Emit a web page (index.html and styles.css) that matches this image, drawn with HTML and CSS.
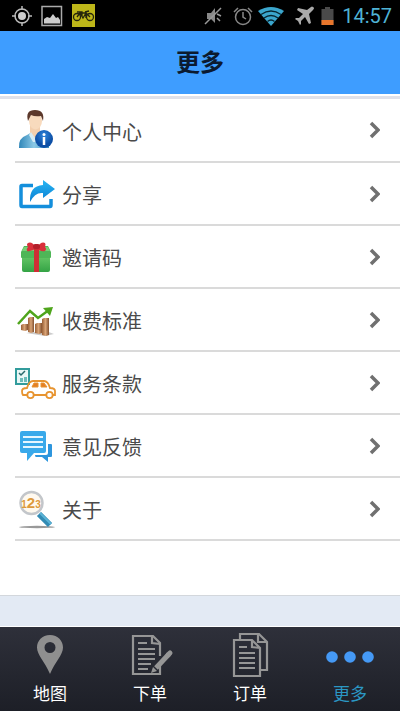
FILE: index.html
```html
<!DOCTYPE html>
<html lang="zh-CN">

<head>
  <meta charset="UTF-8">
  <meta name="viewport" content="width=device-width, initial-scale=1.0">
  <title>更多</title>
  <link rel="stylesheet" href="styles.css">
</head>

<body>
  <div class="status">
    <div class="status-left">
      <svg width="20" height="22" viewBox="0 0 20 22" fill="none" stroke="#bbb" stroke-width="1.5">
        <circle cx="10" cy="11" r="7" />
        <circle cx="10" cy="11" r="4" fill="#ccc" stroke="none" />
        <path d="M10 1v4M10 17v4M0 11h4M16 11h4" />
      </svg>
      <svg width="22" height="22" viewBox="0 0 22 22">
        <rect x="1" y="1.500" width="19.500" height="19" fill="none" stroke="#aaa" stroke-width="1.500" />
        <path d="M3 18.500V14l3-2 3 1 3-4 3 4 2-1 2 3v3.500z" fill="#ccc" />
      </svg>
      <svg width="23" height="23" viewBox="0 0 23 23">
        <rect width="23" height="23" fill="#bdb619" />
        <g fill="none" stroke="#25250c" stroke-width="1.300">
          <circle cx="5" cy="13" r="3.500" />
          <circle cx="18" cy="13" r="3.500" />
          <path d="M5 13l3-4h6l4 4M8 9l3 5 3-5M5 8h5v5M14 7v7M17 7l-4 1" />
        </g>
      </svg>
    </div>
    <div class="status-right">
      <svg class="mute" width="18" height="20" viewBox="0 0 18 20">
        <path d="M3 7h4l4-5v15l-4-4H3z" fill="#888" />
        <path d="M1 18L17 2M13 8l4 2M13 12l3 3" stroke="#999" stroke-width="1.500" />
      </svg>
      <svg class="alarm" width="20" height="20" viewBox="0 0 20 20" fill="none" stroke="#888" stroke-width="1.500">
        <circle cx="10" cy="11" r="7.500" />
        <path d="M10 6v5l3 2M1 6l4-4M19 6l-4-4" />
      </svg>
      <svg class="wifi" width="26" height="20" viewBox="0 0 26 20">
        <path d="M0 5Q13-3 26 5L13 20z" fill="#3ba6cd" />
        <path d="M3 8.500q10-7 20 0M6 12q7-5 14 0M9.500 15.500q3.500-3 7 0" fill="none" stroke="#062530" stroke-width="1.300" />
      </svg>
      <svg class="plane" width="20" height="20" viewBox="0 0 20 20">
        <path d="M18 1q2 1 0 3l-4 4 2 9-2 1-4-7-4 4v3l-1 1-2-4-3-2 1-1h3l4-4-6-4 1-2 9 2 4-3q1-1 2 0z" fill="#aaa" />
      </svg>
      <svg class="battery" width="13" height="20" viewBox="0 0 13 20">
        <path d="M4 1h5v2h3.500v16H.5V3H4z" fill="#4a4a4a" />
        <path d="M.5 14h12v5H.5z" fill="#e8762c" />
      </svg>
      <span class="clock">14:57</span>
    </div>
  </div>

  <header class="title">
    <h1>更多</h1>
  </header>

  <main>
    <ul class="menu">
      <li>
        <a href="#profile">
          <svg class="icon" viewBox="0 0 42 44">
            <defs>
              <linearGradient id="shirt" x2="1">
                <stop offset="0" stop-color="#2f86b8" />
                <stop offset=".5" stop-color="#8cc9e6" />
                <stop offset="1" stop-color="#3c8fc0" />
              </linearGradient>
              <radialGradient id="badge" cy=".3">
                <stop offset="0" stop-color="#2f86dd" />
                <stop offset="1" stop-color="#0d4fa6" />
              </radialGradient>
            </defs>
            <path d="M4 40q-1-10 8-13l5-3h8l5 4q5 2 4 12z" fill="url(#shirt)" />
            <path d="M15 17h10v8l-5 7-5-7z" fill="#f3cfae" />
            <path d="M16 24l4 6 5-6 2 3-4 7h-5l-4-7z" fill="#d5ebf4" />
            <ellipse cx="20.500" cy="13" rx="6.500" ry="8.500" fill="#f8dabd" />
            <path d="M13 13Q10 2 20 2q10 0 8 11l-2-5q-6 1-10-1z" fill="#5c382b" />
            <circle cx="29" cy="31" r="9" fill="url(#badge)" />
            <circle cx="29" cy="26.500" r="1.500" fill="#fff" />
            <path d="M29 29v8" stroke="#fff" stroke-width="2.500" />
          </svg>
          <span>个人中心</span>
          <svg class="arrow" viewBox="0 0 11 18"><path d="M2 2l7 7-7 7" /></svg>
        </a>
      </li>
      <li>
        <a href="#share">
          <svg class="icon" viewBox="0 0 42 44">
            <defs>
              <linearGradient id="share" x2="0" y2="1">
                <stop offset="0" stop-color="#29b6f3" />
                <stop offset="1" stop-color="#087fd3" />
              </linearGradient>
            </defs>
            <path d="M18 13.500H7q-1 0-1 1V33q0 1.500 1 1.500h28q1 0 1-1.500v-6" fill="none" stroke="#148fdc" stroke-width="3.500" />
            <path d="M28 8l12 9-12 9v-5q-8-1-13 9-1-16 13-17z" fill="url(#share)" />
          </svg>
          <span>分享</span>
          <svg class="arrow" viewBox="0 0 11 18"><path d="M2 2l7 7-7 7" /></svg>
        </a>
      </li>
      <li>
        <a href="#invite">
          <svg class="icon" viewBox="0 0 42 44">
            <defs>
              <linearGradient id="gift" x2="0" y2="1">
                <stop offset="0" stop-color="#68c968" />
                <stop offset="1" stop-color="#34a345" />
              </linearGradient>
            </defs>
            <rect x="7" y="20" width="28" height="17" rx="2" fill="url(#gift)" />
            <path d="M9 11h24l3 6v5q0 1-1 1H7q-1 0-1-1v-5z" fill="#4fb657" />
            <path d="M9 12h24l2 4H7z" fill="#78cf77" />
            <path d="M19 12h5v25h-5z" fill="#cf2d35" />
            <path d="M21 13q-4-7-8-5-2 1 0 4-2 2-1 4 5 1 9-3zm1 0q4-7 8-5 1 1 0 4 2 2 0 4-5 1-8-3z" fill="#d9303b" />
            <rect x="18" y="9" width="7" height="5" rx="2" fill="#b41f2b" />
          </svg>
          <span>邀请码</span>
          <svg class="arrow" viewBox="0 0 11 18"><path d="M2 2l7 7-7 7" /></svg>
        </a>
      </li>
      <li>
        <a href="#price">
          <svg class="icon" viewBox="0 0 42 44">
            <defs>
              <linearGradient id="bar" x2="1">
                <stop offset="0" stop-color="#9a6036" />
                <stop offset=".5" stop-color="#d9a376" />
                <stop offset="1" stop-color="#83502e" />
              </linearGradient>
            </defs>
            <path d="M11 35l19 3 9-2-8-3z" fill="#ccc" />
            <g fill="url(#bar)">
              <path d="M6 27l2-1h5v6l-3 1-4-1z" />
              <path d="M13 20l2-1h4v15l-3 1-3-1z" />
              <path d="M20 26l2-1h5v10l-3 1-4-1z" />
              <path d="M27 21l2-1h5v17l-3 1-4-1z" />
            </g>
            <path d="M3 26l12-13 8 7 11-8" fill="none" stroke="#4fa51c" stroke-width="2.500" />
            <path d="M28 10l10-1-3 9z" fill="#4fa51c" />
          </svg>
          <span>收费标准</span>
          <svg class="arrow" viewBox="0 0 11 18"><path d="M2 2l7 7-7 7" /></svg>
        </a>
      </li>
      <li>
        <a href="#terms">
          <svg class="icon" viewBox="0 0 42 44">
            <rect x="1" y="8" width="13" height="15" fill="#e9f7f6" stroke="#329c9c" stroke-width="2" />
            <path d="M4 12l2 2 4-4" fill="none" stroke="#286a6c" stroke-width="1.500" />
            <path d="M5 17h3v4H5zM9 16h3v5H9z" fill="#6dbcba" />
            <g fill="none" stroke="#e79430" stroke-width="1.800">
              <path d="M12 34H8q-1-1-1-4 0-3 5-3 2-7 6-7h11q4 0 6 7 5 0 5 3v4h-2M19 34h12" />
              <path d="M17 26l2-4h4v4zM26 22h3l3 4h-6z" fill="#e57f25" stroke-width="1" />
              <circle cx="15.500" cy="34" r="3.200" />
              <circle cx="34.500" cy="34" r="3.200" />
            </g>
          </svg>
          <span>服务条款</span>
          <svg class="arrow" viewBox="0 0 11 18"><path d="M2 2l7 7-7 7" /></svg>
        </a>
      </li>
      <li>
        <a href="#feedback">
          <svg class="icon" viewBox="0 0 42 44">
            <path d="M33 20h3q1 0 1 1v11q0 1-1 1h-3v5l-6-5h-6q-1 0-1-2h11q2 0 2-2z" fill="#2e96dd" />
            <path d="M7 7h22q2 0 2 2v18q0 2-2 2H19l-7 8v-8H7q-2 0-2-2V9q0-2 2-2z" fill="#39a9ea" />
            <path d="M8 13h20M8 18h20M8 23h20" stroke="#e5f6ff" stroke-width="2" />
          </svg>
          <span>意见反馈</span>
          <svg class="arrow" viewBox="0 0 11 18"><path d="M2 2l7 7-7 7" /></svg>
        </a>
      </li>
      <li>
        <a href="#about">
          <svg class="icon" viewBox="0 0 42 44">
            <ellipse cx="22" cy="40" rx="18" ry="1.200" fill="#999" />
            <path d="M24 27l11 11" stroke="#328bb4" stroke-width="6" />
            <path d="M25 26l11 11" stroke="#5cb4d6" stroke-width="2" />
            <circle cx="16.500" cy="16" r="11" fill="#fff9ef" stroke="#c3c6ca" stroke-width="2.500" />
            <text class="digits" x="16" y="21" text-anchor="middle">1<tspan class="big">2</tspan>3</text>
          </svg>
          <span>关于</span>
          <svg class="arrow" viewBox="0 0 11 18"><path d="M2 2l7 7-7 7" /></svg>
        </a>
      </li>
    </ul>
  </main>

  <nav class="tabs">
    <a href="#map">
      <svg viewBox="0 0 50 48">
        <path fill-rule="evenodd" d="M25 4C17 4 12 10 12 16.500 12 24 20 31 25 43c5-12 13-19 13-26.500C38 10 33 4 25 4zm0 7a5.500 5.500 0 1 1 0 11 5.500 5.500 0 1 1 0-11z" fill="#8f8f8f" />
      </svg>
      <span>地图</span>
    </a>
    <a href="#order">
      <svg viewBox="0 0 50 48" fill="none" stroke="#969696" stroke-width="2.200">
        <path d="M35 32v11H8V5h20l7 7v13" />
        <path d="M27 5v7l8 1M13 12h9M13 18h17M13 23h17M13 28h17M13 33h13M13 38h10" />
        <path d="M31 37l13-14" stroke-width="5" />
        <path d="M43 24l2-2" stroke-width="5" stroke-linecap="round" />
        <path d="M28 36l-2 6 6-2z" fill="#969696" stroke="none" />
      </svg>
      <span>下单</span>
    </a>
    <a href="#list">
      <svg viewBox="0 0 50 48" fill="none" stroke="#969696" stroke-width="2.200">
        <path d="M15 8V3h19l8 8v28h-6" />
        <path d="M33 3v8h8M9 9h18l8 8v28H9zM27 9v7l8 1" />
        <path d="M14 16h8M14 22h16M14 27h16M14 32h16M14 37h16" />
      </svg>
      <span>订单</span>
    </a>
    <a href="#more" class="on">
      <svg viewBox="0 0 50 48" fill="#4599f5">
        <circle cx="7" cy="26" r="5.800" />
        <circle cx="25" cy="26" r="5.800" />
        <circle cx="43" cy="26" r="5.800" />
      </svg>
      <span>更多</span>
    </a>
  </nav>
</body>

</html>
```

FILE: styles.css
```css
* {
  box-sizing: border-box;
}

body {
  display: flex;
  flex-direction: column;
  min-height: 100vh;
  margin: 0;
  background: #e3eaf4;
  font-family: Roboto, "Noto Sans CJK SC", sans-serif;
}

a {
  color: inherit;
  text-decoration: none;
}

svg {
  display: block;
  flex-shrink: 0;
}

/* 状态栏 */
.status {
  display: flex;
  justify-content: space-between;
  align-items: center;
  height: 31px;
  padding: 0 8px 0 12px;
  background: #000;
}

.status-left,
.status-right {
  display: flex;
  align-items: center;
}

.status-left {
  gap: 9px;
}

.status-right {
  gap: 8px;
}

.alarm,
.plane {
  margin-left: 3px;
}

.wifi {
  margin-left: -3px;
}

.battery {
  margin-left: -2px;
}

.clock {
  font-size: 20px;
  line-height: 30px;
  color: #4fb3d6;
}

/* 标题 */
.title {
  height: 63px;
  padding-top: 2px;
  background: #3e9dff;
  text-align: center;
}

.title h1 {
  margin: 0;
  font-size: 24px;
  line-height: 61px;
  color: #0b1a30;
}

main {
  padding-bottom: 54px;
  border-top: 2px solid #fff;
  border-bottom: 1px solid #d3d7dc;
  background: #fff;
}

/* 菜单 */
.menu {
  margin: 0;
  padding: 0;
  border-top: 3px solid #dfe1ea;
  list-style: none;
}

.menu li {
  margin-left: 15px;
  border-bottom: 2px solid #dadada;
}

.menu a {
  display: flex;
  align-items: center;
  height: 61px;
  padding-right: 20px;
  font-size: 20px;
  color: #4a4a4a;
}

.menu li:first-child a {
  height: 62px;
}

.menu span {
  flex: 1;
  padding: 2px 0 0 5px;
}

.icon {
  width: 42px;
  height: 44px;
}

.arrow {
  width: 11px;
  height: 18px;
  fill: none;
  stroke: #707070;
  stroke-width: 3.5;
}

.digits {
  font-family: "Liberation Sans", sans-serif;
  font-size: 10px;
  font-weight: bold;
  fill: #dd9a3c;
}

.digits .big {
  font-size: 15px;
}

/* 底部导航 */
.tabs {
  display: flex;
  height: 85px;
  margin-top: auto;
  padding-top: 4px;
  border-top: 1px solid #fff;
  background: linear-gradient(#2e303a, #1d1f27);
}

.tabs a {
  display: flex;
  flex: 1;
  flex-direction: column;
  align-items: center;
  gap: 2px;
  font-size: 17px;
  line-height: 26px;
  color: #fff;
}

.tabs svg {
  width: 50px;
  height: 48px;
}

.tabs .on {
  color: #2b97c4;
}
```
